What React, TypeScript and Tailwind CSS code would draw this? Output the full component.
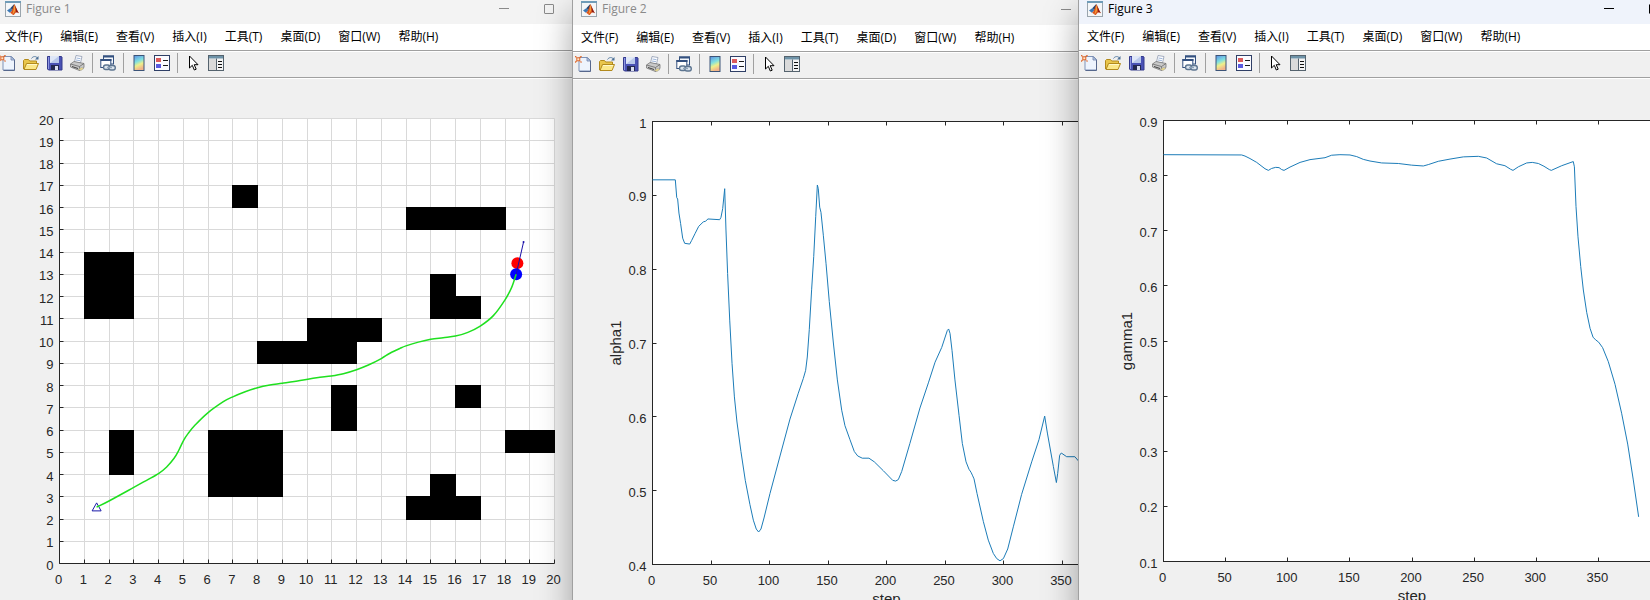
// Three plot windows side by side on one desktop: the obstacle map with the
// planned path, and the two weight curves (alpha1, gamma1) over the steps.

import type { ReactNode } from "react";
import clsx from "clsx";

type Point = [number, number];

const MENUS = ["文件(F)", "编辑(E)", "查看(V)", "插入(I)", "工具(T)", "桌面(D)", "窗口(W)", "帮助(H)"];

/** Obstacles as [x, y, width, height] in map units. */
const OBSTACLES = [
  [7, 16, 1, 1],
  [14, 15, 4, 1],
  [1, 11, 2, 3],
  [15, 12, 1, 1],
  [15, 11, 2, 1],
  [10, 10, 3, 1],
  [8, 9, 4, 1],
  [11, 6, 1, 2],
  [16, 7, 1, 1],
  [2, 4, 1, 2],
  [6, 3, 3, 3],
  [18, 5, 2, 1],
  [15, 3, 1, 1],
  [14, 2, 3, 1],
];

const ROUTE: Point[] = [
  [1.5, 2.53], [2, 2.81], [3, 3.42], [3.52, 3.74], [4, 4.04], [4.33, 4.34], [4.63, 4.73],
  [4.82, 5.09], [5.02, 5.55], [5.2, 5.85], [5.47, 6.21], [5.97, 6.75], [6.62, 7.27],
  [6.98, 7.48], [7.5, 7.72], [8, 7.9], [8.5, 8.02], [9, 8.1], [9.72, 8.22], [10.39, 8.35],
  [10.98, 8.43], [11.47, 8.53], [12, 8.71], [12.48, 8.92], [13, 9.21], [13.35, 9.45],
  [13.76, 9.67], [14, 9.78], [14.5, 9.95], [15, 10.08], [15.5, 10.15], [16, 10.22],
  [16.5, 10.39], [17, 10.67], [17.53, 11.14], [18, 11.85], [18.27, 12.41], [18.45, 13],
];

const ALPHA: Point[] = [
  [0, 0.921], [19.5, 0.921], [20.7, 0.897], [21.5, 0.895], [22.6, 0.876], [24, 0.862],
  [25.8, 0.842], [27.5, 0.835], [31.8, 0.834], [33.5, 0.839], [36.3, 0.848], [39.5, 0.858],
  [43.4, 0.864], [45.4, 0.865], [47.4, 0.868], [57.4, 0.867], [58.5, 0.87], [60, 0.882],
  [61.7, 0.909], [62.8, 0.853], [64.2, 0.794], [66, 0.731], [68, 0.672], [70, 0.627],
  [72.2, 0.593], [75.6, 0.553], [79.3, 0.514], [83.3, 0.481], [86.2, 0.46], [88.7, 0.448],
  [90.7, 0.444], [92.7, 0.448], [95.3, 0.463], [100.4, 0.496], [109, 0.547], [117.5, 0.597],
  [124.6, 0.632], [128.9, 0.652], [130.9, 0.663], [132.3, 0.681], [134, 0.718], [136, 0.772],
  [137.8, 0.817], [139.5, 0.871], [140.9, 0.914], [141.7, 0.909], [142.9, 0.884], [144, 0.877],
  [146, 0.846], [148.3, 0.808], [151.1, 0.756], [154.6, 0.7], [158, 0.65], [161.7, 0.609],
  [164.5, 0.588], [168.8, 0.569], [172.5, 0.553], [175.4, 0.547], [179.3, 0.544], [185, 0.544],
  [189.6, 0.539], [197.3, 0.527], [205.3, 0.514], [207.8, 0.513], [210.1, 0.515], [213, 0.526],
  [220, 0.564], [228.6, 0.612], [235.8, 0.646], [241.5, 0.674], [247.2, 0.694], [252, 0.717],
  [253.1, 0.719], [254.3, 0.713], [256, 0.69], [258.5, 0.65], [262, 0.602], [264.8, 0.564],
  [268, 0.539], [270.5, 0.529], [272.2, 0.525], [273.4, 0.521], [274.8, 0.516], [277.4, 0.496],
  [282.8, 0.458], [287, 0.433], [291.3, 0.415], [294.2, 0.408], [297, 0.405], [299.9, 0.408],
  [303.6, 0.421], [308.4, 0.451], [315.5, 0.495], [324.1, 0.539], [330.3, 0.569], [335.2, 0.601],
  [337.5, 0.578], [342.6, 0.533], [345.2, 0.511], [346.3, 0.523], [348, 0.548], [349.4, 0.551],
  [354, 0.546], [361, 0.546], [364.2, 0.54], [372, 0.53],
];

const GAMMA: Point[] = [
  [0, 0.838], [62.9, 0.8375], [65.6, 0.8355], [69.6, 0.831], [75, 0.824], [81.7, 0.8125],
  [84.4, 0.8095], [87, 0.813], [90.3, 0.815], [93, 0.8145], [95.1, 0.811], [97, 0.8095],
  [101.8, 0.8155], [109.9, 0.824], [117.9, 0.829], [130, 0.8325], [135.3, 0.837], [142, 0.838],
  [150.1, 0.8375], [155.5, 0.8345], [160.8, 0.8295], [166.2, 0.8265], [175.6, 0.823],
  [189, 0.822], [199.7, 0.819], [209.1, 0.8175], [213.1, 0.82], [221.2, 0.826], [230.6, 0.83],
  [241.3, 0.834], [253.4, 0.835], [260.1, 0.832], [268.1, 0.8215], [274.8, 0.818],
  [279.4, 0.8115], [281.3, 0.8095], [285.6, 0.816], [292.3, 0.823], [296.8, 0.824],
  [301.7, 0.822], [306.2, 0.817], [310.5, 0.811], [312.1, 0.8095], [320.5, 0.818],
  [329.8, 0.8255], [330.7, 0.816], [332, 0.744], [333.6, 0.689], [335.8, 0.635], [337.9, 0.5925],
  [340.6, 0.552], [343.3, 0.523], [345.7, 0.507], [347.8, 0.502], [350.2, 0.498], [353.4, 0.488],
  [358, 0.4625], [363.4, 0.4215], [368.7, 0.369], [373.6, 0.313], [378.1, 0.248], [382.4, 0.181],
];

const range = (n: number) => Array.from({ length: n }, (_, i) => i);

/* ---------- icons ---------- */

function MatlabIcon() {
  return (
    <svg width="16" height="16" viewBox="0 0 16 16" aria-hidden="true">
      <rect x="0.5" y="0.5" width="15" height="15" fill="#f4f6f8" stroke="#9aa5ad" />
      <path d="M0 0h16v2H0z" fill="#6f9cb8" />
      <path d="M2 9.5 5.5 7l2 2.2-2.7 2.6z" fill="#3b78b5" />
      <path d="M5.5 7 9 3.2l.6.6-2.1 5.4z" fill="#27456d" />
      <path d="M9.2 3.2c1.3 1.2 2.4 6 4.8 9-1.5-1.2-2.7-1.3-3.6-.3-.8.9-1.5 2.1-2.3 2.1-.8-.1-1.5-2-3.3-2.2C6.8 11.2 8 6.5 9.2 3.2z" fill="#d9541e" />
      <path d="M9.2 3.4c-.2 3.3-.7 6.6-1.7 9.8.9-.6 1.9-1.7 2.5-3.7.3-2.3-.2-4.5-.8-6.1z" fill="#f5a03a" />
      <path d="M9.6 3.6c1.2 1.8 2.4 6.2 4.4 8.6-1.3-1-2.3-1.2-3-.8.1-2.5-.4-5.3-1.4-7.8z" fill="#8e1c12" />
    </svg>
  );
}

function NewIcon() {
  return (
    <svg width="17" height="16" viewBox="0 0 17 16" aria-hidden="true">
      <path d="M4 1.5h8.5l3 3v10.5H4z" fill="#eef4fd" stroke="#7f93b8" />
      <path d="M15.5 5v10.5H4.5" fill="none" stroke="#56678c" />
      <path d="M12 1.5v3.5h3.5z" fill="#b9cbe8" stroke="#6f82a8" strokeWidth="0.8" />
      <path d="M0 0l1.5 1.5M5.5 5.5l1 1M6.5 0 5 1.5M0 6.5 1.5 5" stroke="#e0682a" strokeWidth="1.2" />
      <rect x="1.8" y="1.8" width="3" height="3" fill="#ffe6c8" stroke="#dd6428" />
    </svg>
  );
}

function OpenIcon() {
  return (
    <svg width="17" height="16" viewBox="0 0 17 16" aria-hidden="true">
      <path d="M8.5 3.5c1.5-2.5 4.5-2.5 6-.5" fill="none" stroke="#5b7fa5" />
      <path d="M15.5 1v3.5H12z" fill="#4a6f96" />
      <path d="M.5 14V5.5l1-1h4l1.2 1.5h6.8V9" fill="#e9c64c" stroke="#b28a1d" />
      <path d="M1 14.5 3.5 8.5h12L13 14.5z" fill="#fbe88a" stroke="#b28a1d" />
      <path d="M4 9.5h10" stroke="#fff8c9" />
    </svg>
  );
}

function SaveIcon() {
  return (
    <svg width="16" height="16" viewBox="0 0 16 16" aria-hidden="true">
      <path d="M.5 1.5h14l.5.5v13H1.5l-1-1z" fill="#4a52b4" stroke="#343a8c" />
      <path d="M1.5 2v12" stroke="#8f97e0" />
      <rect x="3" y="1" width="9" height="7" fill="#dfe7f7" />
      <path d="M3 8 12 1v7z" fill="#b9c8ea" />
      <rect x="4" y="10" width="8" height="5" fill="#23284f" />
      <rect x="8" y="11" width="3" height="4" fill="#d9def0" />
    </svg>
  );
}

function PrintIcon() {
  return (
    <svg width="15" height="16" viewBox="0 0 15 16" aria-hidden="true">
      <path d="M4.5 7 6 .5l6 1L10.5 8z" fill="#fdfdff" stroke="#8f9bb0" strokeWidth="0.8" />
      <path d="M6.5 3l4 .7M6 5l4 .7" stroke="#86a5cf" strokeWidth="0.8" />
      <path d="M.5 9 4 6.5l10 2v4L9.5 15.5.5 12z" fill="#c9c9c9" stroke="#777" strokeWidth="0.8" />
      <path d="M.5 9l9 2.5L14 8.5M9.5 11.5v4" fill="none" stroke="#6b6b6b" strokeWidth="0.8" />
      <path d="M2 11.5l6 2" stroke="#444" />
      <path d="M8 14.5l3.5-2 2.5.8-3 2.2z" fill="#e9d88a" stroke="#999" strokeWidth="0.5" />
    </svg>
  );
}

function LinkIcon() {
  return (
    <svg width="16" height="16" viewBox="0 0 16 16" aria-hidden="true">
      <rect x="3.5" y="1" width="10" height="8" fill="#f5f8fc" stroke="#33507f" />
      <path d="M3 1.5h11" stroke="#33507f" strokeWidth="2" />
      <rect x="0.8" y="4.5" width="10" height="8" fill="#fff" stroke="#33507f" />
      <path d="M.5 5h11" stroke="#33507f" strokeWidth="2" />
      <rect x="3.5" y="10" width="6.5" height="4.5" rx="2.2" fill="#dce5ee" stroke="#5d7590" strokeWidth="1.4" />
      <rect x="8.8" y="10.5" width="6.5" height="4.5" rx="2.2" fill="#dce5ee" stroke="#5d7590" strokeWidth="1.4" />
      <path d="M7 12.5h5" stroke="#8ea3b8" strokeWidth="1.4" />
    </svg>
  );
}

function ColorbarIcon() {
  return (
    <svg width="16" height="16" viewBox="0 0 16 16" aria-hidden="true">
      <defs>
        <linearGradient id="colorbar" x1="0" y1="0" x2="0.3" y2="1">
          <stop offset="0" stopColor="#5c8fe6" />
          <stop offset="0.45" stopColor="#7fe0e0" />
          <stop offset="0.7" stopColor="#eef08a" />
          <stop offset="1" stopColor="#f2b48a" />
        </linearGradient>
      </defs>
      <rect x="3" y="0.5" width="10" height="15" fill="url(#colorbar)" stroke="#3c5478" />
    </svg>
  );
}

function LegendIcon() {
  return (
    <svg width="16" height="16" viewBox="0 0 16 16" aria-hidden="true">
      <rect x="0.5" y="0.5" width="15" height="15" fill="#fbfbff" stroke="#2f3f66" />
      <rect x="2" y="3" width="5" height="4" fill="#dd5a5a" />
      <rect x="2" y="9" width="5" height="4" fill="#5a5ae0" />
      <path d="M9 5.5h5M9 10.5h5" stroke="#1c1c1c" />
    </svg>
  );
}

function PointerIcon() {
  return (
    <svg width="16" height="16" viewBox="0 0 16 16" aria-hidden="true">
      <path d="M4.5 1v12l2.8-2.7 2 4.7 1.9-.8-2-4.5h3.8z" fill="#fff" stroke="#000" />
    </svg>
  );
}

function InspectorIcon() {
  return (
    <svg width="16" height="16" viewBox="0 0 16 16" aria-hidden="true">
      <rect x="0.5" y="0.5" width="15" height="15" fill="#f4f4f4" stroke="#55636e" />
      <path d="M1 1h14v2.5H1z" fill="#6e93a8" />
      <path d="M1 4h7v11H1z" fill="#dadada" />
      <path d="M8.5 3.5v12" stroke="#55636e" />
      <path d="M10 6.5h4M10 9.5h4M10 12.5h4" stroke="#111" />
    </svg>
  );
}

/* ---------- window chrome ---------- */

function ToolButton({ label, children }: { label: string; children: ReactNode }) {
  return (
    <button type="button" aria-label={label} className="shrink-0">
      {children}
    </button>
  );
}

function Divider() {
  return <span className="h-5 w-px shrink-0 bg-[#a0a0a0]" />;
}

function Toolbar() {
  return (
    <div className="flex h-[27px] shrink-0 items-center gap-[7px] border-t border-b border-t-white border-b-[#a0a0a0] pb-[3px] pl-[2px]">
      <ToolButton label="New figure"><NewIcon /></ToolButton>
      <ToolButton label="Open file"><OpenIcon /></ToolButton>
      <ToolButton label="Save figure"><SaveIcon /></ToolButton>
      <ToolButton label="Print figure"><PrintIcon /></ToolButton>
      <Divider />
      <ToolButton label="Link plot"><LinkIcon /></ToolButton>
      <Divider />
      <ToolButton label="Insert colorbar"><ColorbarIcon /></ToolButton>
      <ToolButton label="Insert legend"><LegendIcon /></ToolButton>
      <Divider />
      <ToolButton label="Edit plot"><PointerIcon /></ToolButton>
      <ToolButton label="Open property inspector"><InspectorIcon /></ToolButton>
    </div>
  );
}

interface FigureWindowProps {
  title: string;
  active?: boolean;
  className: string;
  titleBarClass?: string;
  children: ReactNode;
}

function FigureWindow({ title, active, className, titleBarClass = "h-6", children }: FigureWindowProps) {
  return (
    <section
      className={clsx(
        "relative flex h-full flex-col border-l border-[#a0a0a0] bg-[#f0f0f0] shadow-[0_12px_32px_rgba(0,0,0,0.35)]",
        className,
      )}
    >
      <header
        className={clsx(
          "flex shrink-0 items-center pb-[7px] pl-2",
          titleBarClass,
          active ? "bg-[#eff3fb] text-black" : "bg-[#f3f3f3] text-[#8a8a8a]",
        )}
      >
        <MatlabIcon />
        <h2 className="ml-[5px] grow text-[12px] leading-4">{title}</h2>
        <div className="flex">
          <button type="button" aria-label="Minimize" className="flex h-4 w-[45px] items-center justify-center">
            <span className="h-px w-[10px] bg-current" />
          </button>
          <button type="button" aria-label="Maximize" className="flex h-4 w-[45px] items-center justify-center">
            <span className="size-[10px] rounded-[1px] border border-current" />
          </button>
          <button type="button" aria-label="Close" className="flex h-4 w-[45px] items-center justify-center">
            <svg width="10" height="10" viewBox="0 0 10 10" stroke="currentColor" aria-hidden="true">
              <path d="M0 0l10 10M10 0 0 10" />
            </svg>
          </button>
        </div>
      </header>
      <nav className="flex h-[27px] shrink-0 items-center gap-[18px] border-b border-[#a0a0a0] bg-white pl-2 text-[12px] text-black">
        {MENUS.map((m) => (
          <button key={m} type="button" className="whitespace-nowrap">
            {m}
          </button>
        ))}
      </nav>
      <Toolbar />
      <div className="min-h-0 grow overflow-hidden border-t border-white">{children}</div>
    </section>
  );
}

/* ---------- plots ---------- */

interface PlotProps {
  left: number;
  top: number;
  width: number;
  height: number;
  x: Point;
  y: Point;
}

const scale = ([lo, hi]: Point, from: number, to: number) => (v: number) =>
  from + ((v - lo) / (hi - lo)) * (to - from);

// centre of the pixel, so 1px lines stay crisp
const snap = (v: number) => Math.floor(v) + 0.5;

/** Catmull-Rom spline through the points. */
function smoothPath(p: Point[]) {
  let d = `M${p[0][0]} ${p[0][1]}`;
  for (let i = 0; i < p.length - 1; i++) {
    const a = p[Math.max(i - 1, 0)];
    const b = p[i];
    const c = p[i + 1];
    const e = p[Math.min(i + 2, p.length - 1)];
    d += `C${b[0] + (c[0] - a[0]) / 6} ${b[1] + (c[1] - a[1]) / 6} ${c[0] - (e[0] - b[0]) / 6} ${c[1] - (e[1] - b[1]) / 6} ${c[0]} ${c[1]}`;
  }
  return d;
}

function MapPlot({ left, top, width, height, x, y }: PlotProps) {
  const sx = scale(x, left, left + width);
  const sy = scale(y, top + height, top);
  const units = range(21);
  const bottom = top + height;
  const route = ROUTE.map(([a, b]): Point => [sx(a), sy(b)]);

  return (
    <svg width="616" height="521" className="block" role="img" aria-label="Obstacle map with planned path">
      <rect x={left} y={top} width={width} height={height} fill="#fff" />
      <g stroke="#d9d9d9">
        {units.map((u) => (
          <g key={u}>
            <path d={`M${snap(sx(u))} ${top}V${bottom}`} />
            <path d={`M${left} ${snap(sy(u))}H${left + width}`} />
          </g>
        ))}
      </g>
      {OBSTACLES.map(([ox, oy, w, h]) => (
        <rect
          key={`${ox}-${oy}`}
          x={snap(sx(ox)) - 0.5}
          y={snap(sy(oy + h)) - 0.5}
          width={snap(sx(ox + w)) - snap(sx(ox)) + 1}
          height={snap(sy(oy)) - snap(sy(oy + h)) + 1}
        />
      ))}
      <g stroke="#262626" fill="none">
        <path d={`M${left} ${top}V${bottom}H${left + width}`} />
        {units.map((u) => (
          <path key={u} d={`M${snap(sx(u))} ${bottom}v-4M${left} ${snap(sy(u))}h4`} />
        ))}
      </g>
      <g fill="#262626" fontSize="13">
        {units.map((u) => (
          <g key={u}>
            <text x={sx(u) - 1} y={bottom + 20} textAnchor="middle">{u}</text>
            <text x={left - 6} y={sy(u) + 6} textAnchor="end">{u}</text>
          </g>
        ))}
      </g>
      <circle cx={sx(18.5)} cy={sy(13.5)} r="6" fill="#f00" />
      <circle cx={sx(18.45)} cy={sy(13)} r="6" fill="#00f" />
      <path d={`M${sx(18.45)} ${sy(13)}L${sx(18.75)} ${sy(14.45)}`} stroke="#1a0fa8" />
      <circle cx={sx(18.75)} cy={sy(14.45)} r="1" fill="#1a0fa8" />
      <path
        d={`M${sx(1.5) - 4.5} ${sy(2.5) + 3}h9l-4.5-8z`}
        fill="none"
        stroke="#1818a8"
      />
      <path d={smoothPath(route)} fill="none" stroke="#1fe01f" strokeWidth="1.5" />
    </svg>
  );
}

interface CurvePlotProps extends PlotProps {
  label: string;
  xTicks: number[];
  yTicks: number[];
  data: Point[];
}

function CurvePlot({ left, top, width, height, x, y, label, xTicks, yTicks, data }: CurvePlotProps) {
  const sx = scale(x, left, left + width);
  const sy = scale(y, top + height, top);
  const bottom = top + height;
  const labelX = left - 32;
  const labelY = top + height / 2;

  return (
    <svg width="640" height="540" className="block" role="img" aria-label={`${label} over step`}>
      <rect x={left} y={top} width={width} height={height} fill="#fff" stroke="#262626" />
      <g stroke="#262626">
        {xTicks.map((v) => (
          <path key={v} d={`M${snap(sx(v))} ${bottom}v-4M${snap(sx(v))} ${top}v4`} />
        ))}
        {yTicks.map((v) => (
          <path key={v} d={`M${left} ${snap(sy(v))}h4`} />
        ))}
      </g>
      <g fill="#262626" fontSize="13">
        {xTicks.map((v) => (
          <text key={v} x={sx(v) - 1} y={bottom + 20} textAnchor="middle">{v}</text>
        ))}
        {yTicks.map((v) => (
          <text key={v} x={left - 6} y={sy(v) + 6} textAnchor="end">{v}</text>
        ))}
      </g>
      <g fill="#262626" fontSize="15" textAnchor="middle">
        <text x={left + width / 2} y={bottom + 39}>step</text>
        <text x={labelX} y={labelY} transform={`rotate(-90 ${labelX} ${labelY})`}>{label}</text>
      </g>
      <polyline
        points={data.map(([a, b]) => `${sx(a)},${sy(b)}`).join(" ")}
        fill="none"
        stroke="#1c7cb8"
        strokeLinejoin="round"
      />
    </svg>
  );
}

const STEPS = [0, 50, 100, 150, 200, 250, 300, 350];

export default function App() {
  return (
    <main className="grid h-screen grid-cols-[572fr_506fr_572fr] overflow-hidden bg-[#f0f0f0] font-['Open_Sans','Noto_Sans_CJK_SC',sans-serif] [&_svg_text]:font-['Liberation_Sans',sans-serif]">
      <div className="min-w-0">
        <FigureWindow title="Figure 1" className="-ml-1 w-[620px]">
          <MapPlot left={62.5} top={39.5} width={495} height={445} x={[0, 20]} y={[0, 20]} />
        </FigureWindow>
      </div>
      <div className="min-w-0">
        <FigureWindow title="Figure 2" className="w-[606px]" titleBarClass="h-[25px]">
          <CurvePlot
            left={79.5}
            top={41.5}
            width={468}
            height={443}
            x={[0, 400]}
            y={[0.4, 1]}
            label="alpha1"
            xTicks={STEPS}
            yTicks={[0.4, 0.5, 0.6, 0.7, 0.8, 0.9, 1]}
            data={ALPHA}
          />
        </FigureWindow>
      </div>
      <div className="min-w-0">
        <FigureWindow title="Figure 3" active className="w-[643px]">
          <CurvePlot
            left={84.5}
            top={41.5}
            width={497}
            height={441}
            x={[0, 400]}
            y={[0.1, 0.9]}
            label="gamma1"
            xTicks={STEPS}
            yTicks={[0.1, 0.2, 0.3, 0.4, 0.5, 0.6, 0.7, 0.8, 0.9]}
            data={GAMMA}
          />
        </FigureWindow>
      </div>
    </main>
  );
}
